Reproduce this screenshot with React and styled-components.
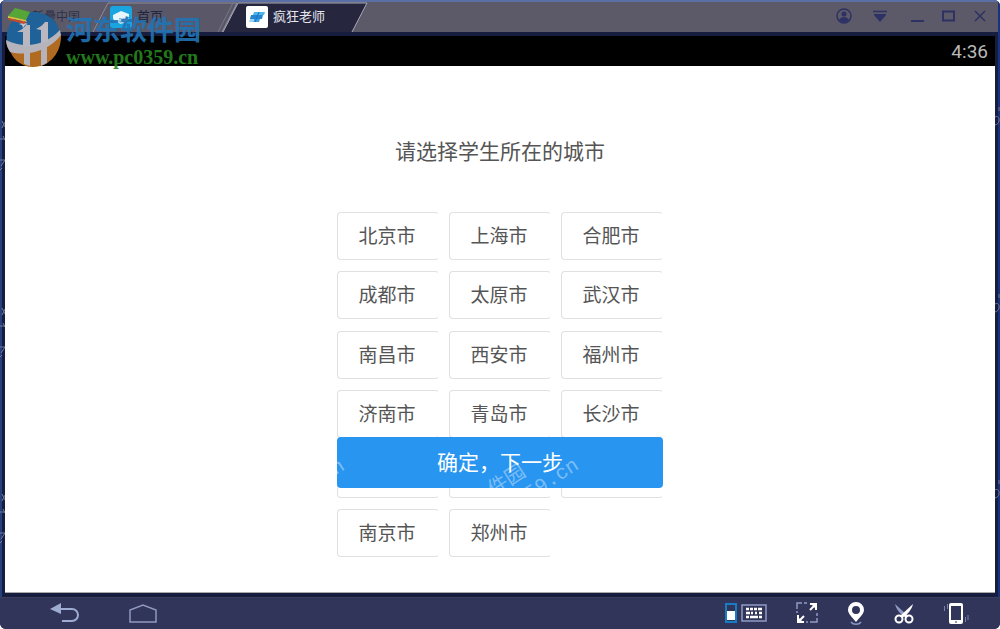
import React from "react";
import styled, { createGlobalStyle } from "styled-components";

const Global = createGlobalStyle`
  * { box-sizing: border-box; }
  html, body, #root { height: 100%; margin: 0; }
  body { background: #fff; font-family: Roboto, "Noto Sans CJK SC", sans-serif; }
  button { font: inherit; border: 0; padding: 0; margin: 0; background: none; cursor: pointer; }
  svg { display: block; }
`;

const Frame = styled.div`
  position: relative;
  min-height: 100vh;
  display: flex;
  flex-direction: column;
  background: #171d3e;
  border-radius: 6px;
  overflow: hidden;
`;

const TitleBar = styled.header`
  display: flex;
  align-items: center;
  height: 32px;
  background: #5c5a69;
  border-top: 2px solid #596fa5;
`;

const Brand = styled.div`
  width: 92px;
  padding-left: 32px;
  font-size: 12px;
  line-height: 30px;
  color: #2e3148;
`;

const TabList = styled.nav`
  display: flex;
  flex: 1;
  height: 30px;
`;

const Tab = styled.button`
  position: relative;
  width: 146px;
  margin-right: -16px;
  height: 30px;
  display: flex;
  align-items: center;
  padding-left: ${(p) => (p.$active ? 24 : 18)}px;
  font-size: 13px;
  color: ${(p) => (p.$active ? "#e4e6f0" : "#20243c")};
`;

const TabShape = styled.svg`
  position: absolute;
  inset: 0;
`;

const TabContent = styled.span`
  position: relative;
  display: flex;
  align-items: center;
  gap: 5px;
  line-height: 18px;
`;

const WindowControls = styled.div`
  display: flex;
  align-items: center;
  padding-right: 10px;
  gap: 10px;
`;

const ControlButton = styled.button`
  width: ${(p) => p.$width || 21}px;
  height: 24px;
  display: grid;
  place-items: center;
`;

const Device = styled.main`
  flex: 1;
  display: flex;
  flex-direction: column;
  border: solid #171d3e;
  border-width: 4px 5px;
`;

const StatusBar = styled.div`
  height: 30px;
  padding-right: 7px;
  background: #000;
  color: #b9b9b9;
  font-size: 19px;
  line-height: 32px;
  text-align: right;
`;

const Page = styled.section`
  position: relative;
  flex: 1;
  display: flex;
  flex-direction: column;
  align-items: center;
  padding: 72px 20px 34px;
  background: #fff;
  border-bottom: 1px solid #aaa;
`;

const Title = styled.h1`
  margin: 0 0 46px;
  font-size: 21px;
  line-height: 28px;
  font-weight: 400;
  color: #555;
`;

const CityGrid = styled.div`
  display: grid;
  grid-template-columns: repeat(3, 1fr);
  grid-auto-rows: 48px;
  align-content: space-between;
  column-gap: 10px;
  width: 326px;
  height: 345px;
`;

const City = styled.button`
  padding: 2px 2px 0 0;
  border: 1px solid #e0e0e0;
  border-right-color: transparent;
  border-radius: 4px;
  font-size: 19px;
  line-height: 28px;
  color: #555;
  background: #fff;
`;

const CoveredCity = styled(City).attrs({ as: "div" })``;

const Confirm = styled.button`
  position: absolute;
  bottom: 104px;
  width: 326px;
  height: 51px;
  overflow: hidden;
  border-radius: 4px;
  background: #2895f1;
  color: #fff;
  font-size: 21px;
  line-height: 53px;
`;

const FaintMark = styled.span`
  position: absolute;
  left: ${(p) => p.$left}px;
  top: ${(p) => p.$top}px;
  transform: rotate(-33deg);
  font-family: ${(p) => (p.$latin ? '"Liberation Mono", monospace' : '"Noto Sans CJK SC", sans-serif')};
  font-size: 20px;
  line-height: 24px;
  color: rgba(255, 255, 255, 0.4);
  pointer-events: none;
`;

const EdgeMarks = styled.svg`
  position: absolute;
  top: 100px;
  ${(p) => p.$side}: 0;
  pointer-events: none;
`;

const EdgeLine = styled.div`
  position: absolute;
  top: 2px;
  bottom: 32px;
  ${(p) => p.$side}: 0;
  width: 2px;
  background: ${(p) => (p.$side === "left" ? "#24407f" : "#17337e")};
`;

const NavBar = styled.footer`
  display: flex;
  justify-content: space-between;
  align-items: center;
  height: 32px;
  padding: 0 31px 0 50px;
  background: #32355a;
  border-top: 1px solid #3b3e5c;
`;

const NavGroup = styled.div`
  display: flex;
  align-items: center;
  gap: ${(p) => p.$gap}px;
`;

const Watermark = styled.div`
  position: absolute;
  left: 5px;
  top: 6px;
  display: flex;
  gap: 3px;
  pointer-events: none;
`;

const WatermarkText = styled.div`
  padding-top: 6px;
  opacity: 0.9;
`;

const WatermarkName = styled.div`
  font-family: "Noto Sans CJK SC", sans-serif;
  font-size: 27px;
  font-weight: 700;
  line-height: 34px;
  color: #2173b5;
`;

const WatermarkUrl = styled.div`
  font-family: "Liberation Serif", serif;
  font-size: 20px;
  font-weight: 700;
  line-height: 22px;
  color: #26861f;
`;

const cities = [
  "北京市", "上海市", "合肥市",
  "成都市", "太原市", "武汉市",
  "南昌市", "西安市", "福州市",
  "济南市", "青岛市", "长沙市",
  null, null, null,
  "南京市", "郑州市",
];

const INK = "#2d3163";

function TabBackground({ active }) {
  return (
    <TabShape width="146" height="30" aria-hidden="true">
      <path d="M1 30 16 1H145L130 30Z" fill={active ? "#26273e" : "#5a5868"} />
      <path d="M1 30 16 1H145L130 30" fill="none" stroke={active ? "#a5a8b8" : "#8b8b99"} />
      {!active && <path d="M126 30 141 1" stroke="#77778a" />}
    </TabShape>
  );
}

function HomeTabIcon() {
  return (
    <svg width="22" height="22" viewBox="0 0 22 22" aria-hidden="true">
      <rect width="22" height="22" rx="3" fill="#19a5df" />
      <path d="M3 9 11 5l8 3v5l-2 2-6 3-7-3-1-3Z" fill="#e8f5fb" />
      <path d="M9 12h8v4l-5 2-3-2z" fill="#7cbbe0" />
      <path d="m12 12v5m3-5v4M9 14h8" stroke="#d7eef8" />
    </svg>
  );
}

function TeacherTabIcon() {
  return (
    <svg width="22" height="22" viewBox="0 0 22 22" aria-hidden="true">
      <rect width="22" height="22" rx="2" fill="#fff" />
      <path d="M8 6h11l-1 3H7z" fill="#4db4e8" />
      <path d="M5 9h12l-1 4H4z" fill="#2587d4" />
      <path d="M8 13h6l-1 3H7z" fill="#38a1e2" />
      <path d="M4 13h4l-1 3H3z" fill="#9cd3f0" />
      <path d="m13 6-4 10" stroke="#1c70c4" />
    </svg>
  );
}

function SiteLogo() {
  return (
    <svg width="58" height="62" viewBox="0 0 58 62" aria-hidden="true">
      <path d="M2 38C-1 18 12 6 28 6c14 0 25 9 27 21C45 41 22 46 2 38Z" fill="#1f6299" />
      <path d="M5 45c18 4 38-2 51-17 1 18-11 33-28 33C18 61 9 55 5 45Z" fill="#b06b20" />
      <path d="M1 34c0 5 2 9 4 12 20 5 41-3 51-17l-1-5C42 38 21 44 1 34Z" fill="#b5b3bb" />
      <path d="M12 26c4-2 7-4 9-7h4v21h-7V26zM31 23c4-2 7-4 9-7h3v19l-7 3V24z" fill="#b9b8c1" />
      <path d="M19 43h6v17l-6-2zM36 40l6-3v20l-6 3z" fill="#b5b3bb" />
      <path d="m18 14 2 3 3 1-3 1-2 3-1-3-3-1 3-1z" fill="#c3c4cf" />
      <path d="m3 10 7-8 15 4-4 8z" fill="#55a637" />
      <path d="m3 10 18 4 1 2L3 12z" fill="#d5c43d" />
      <path d="m3 12 19 4-3 2-15-4z" fill="#c44a30" />
    </svg>
  );
}

function SideMarks({ side }) {
  const d = side === "left"
    ? "M2 21 5 27M5 22 2 28M0 39h5M3 36l2 4M0 60h5M1 66l4-6 1 5M0 70l2-2"
    : "M0 17c5-3 6 7 0 8M4 7v4";
  return (
    <>
      <EdgeLine $side={side} />
      <EdgeMarks $side={side} width="5" height="450" aria-hidden="true">
        {[0, 187, 373].map((y) => (
          <path key={y} d={d} transform={`translate(0 ${y})`} fill="none" stroke="#777c99" />
        ))}
      </EdgeMarks>
    </>
  );
}

function Icon({ w = 24, children }) {
  return <svg width={w} height="24" viewBox={`0 0 ${w} 24`} fill="none" aria-hidden="true">{children}</svg>;
}

export default function App() {
  return (
    <>
      <Global />
      <Frame>
        <SideMarks side="left" />
        <SideMarks side="right" />
        <TitleBar>
          <Brand>新疊中国</Brand>
          <TabList>
            <Tab>
              <TabBackground />
              <TabContent><HomeTabIcon />首页</TabContent>
            </Tab>
            <Tab $active>
              <TabBackground active />
              <TabContent><TeacherTabIcon />疯狂老师</TabContent>
            </Tab>
          </TabList>
          <WindowControls>
            <ControlButton aria-label="账户" $width={18}>
              <Icon w={18}>
                <circle cx="9" cy="11" r="7" stroke={INK} strokeWidth="1.5" />
                <circle cx="9" cy="9" r="2.5" fill={INK} />
                <path d="M4 15c2-4 8-4 10 0l-3 2H7z" fill={INK} />
              </Icon>
            </ControlButton>
            <ControlButton aria-label="菜单" $width={34}>
              <Icon w={14}><path d="M0 6.5h14" stroke={INK} strokeWidth="1.5" /><path d="M1 9h12v1l-6 7-6-7z" fill={INK} /></Icon>
            </ControlButton>
            <ControlButton aria-label="最小化">
              <Icon w={13}><path d="M0 16h13" stroke={INK} strokeWidth="2" /></Icon>
            </ControlButton>
            <ControlButton aria-label="最大化"><Icon w={13}><path d="M1 6.5h11v9H1z" stroke={INK} strokeWidth="2" /></Icon></ControlButton>
            <ControlButton aria-label="关闭"><Icon w={12}><path d="m1 6 10 10M11 6 1 16" stroke={INK} strokeWidth="1.5" /></Icon></ControlButton>
          </WindowControls>
        </TitleBar>
        <Device>
          <StatusBar>4:36</StatusBar>
          <Page>
            <Title>请选择学生所在的城市</Title>
            <CityGrid>
              {cities.map((name, i) => name ? <City key={i}>{name}</City> : <CoveredCity key={i} />)}
            </CityGrid>
            <Confirm>
              确定，下一步
              <FaintMark aria-hidden="true" $left={-16} $top={22} $latin>cn</FaintMark>
              <FaintMark aria-hidden="true" $left={149} $top={30}>件园</FaintMark>
              <FaintMark aria-hidden="true" $left={185} $top={31} $latin>59.cn</FaintMark>
            </Confirm>
          </Page>
        </Device>
        <NavBar>
          <NavGroup $gap={48}>
            <ControlButton aria-label="返回" $width={30}>
              <Icon w={30}><path d="M0 7 11 1v11z" fill="#9eabd2" /><path d="M10 7h12a6 6 0 0 1 0 12H12" stroke="#9eabd2" strokeWidth="2" /></Icon>
            </ControlButton>
            <ControlButton aria-label="主页" $width={30}>
              <Icon w={30}><path d="M2 20V8l13-5 13 5v12z" stroke="#9099c2" strokeWidth="1.5" /></Icon>
            </ControlButton>
          </NavGroup>
          <NavGroup $gap={24}>
            <ControlButton aria-label="键盘" $width={42}>
              <Icon w={42}>
                <path d="M1 2h10v18H1z" stroke="#177bc5" strokeWidth="2" />
                <path d="M2 9h8v9H2z" fill="#fff" />
                <path d="M17 3h24v16H17z" stroke="#8f9ac3" strokeWidth="1.5" />
                <path d="M21 7h3m1 0h3m1 0h3m1 0h4M21 11h4m1 0h2m2 0h2m2 0h3M21 15h3m1 0h8m1 0h3" stroke="#fff" strokeWidth="2.5" />
              </Icon>
            </ControlButton>
            <ControlButton aria-label="全屏" $width={32}>
              <Icon w={22}>
                <path d="M1 7V1h5m2 0h3M1 9v2M21 11v3m0 2v4h-7m-2 0h-2" stroke="#8f9ac3" strokeWidth="1.5" />
                <path d="M14 2h6v6M19 3l-5 5M2 13v7h6M3 19l5-5" stroke="#fff" strokeWidth="2" />
                <path d="m15 2 5 5V2zM2 15v5h5z" fill="#fff" />
              </Icon>
            </ControlButton>
            <ControlButton aria-label="定位" $width={18}>
              <Icon w={18}>
                <path d="M4 20c2 3 8 3 10 0" stroke="#8799c4" strokeWidth="1.5" />
                <path fillRule="evenodd" d="M9 20C6 16 1 12 1 8a8 8 0 0 1 16 0c0 4-5 8-8 12ZM9 4a4 4 0 1 0 0 8 4 4 0 0 0 0-8Z" fill="#fff" />
              </Icon>
            </ControlButton>
            <ControlButton aria-label="截图" $width={30}>
              <Icon w={20}>
                <path d="M1 2c1 5 5 10 10 13l2-2z" fill="#8f9ac3" />
                <path d="M19 2c-1 5-5 10-11 14l-2-2z" fill="#fff" />
                <circle cx="5" cy="17" r="3.5" stroke="#fff" strokeWidth="2" />
                <circle cx="15" cy="17" r="3.5" stroke="#fff" strokeWidth="2" />
                <path d="m10 12 3 3" stroke="#fff" strokeWidth="3" />
              </Icon>
            </ControlButton>
            <ControlButton aria-label="摇一摇" $width={26}>
              <Icon w={26}>
                <rect x="6" y="1" width="14" height="21" rx="2" fill="#fff" />
                <path d="M8 4h10v14H8z" fill="#32355a" />
                <path d="M12 20h2" stroke="#32355a" />
                <path d="M1.5 4v5M4.5 2v5M22.5 15v5M25 13v5" stroke="#7984ad" />
              </Icon>
            </ControlButton>
          </NavGroup>
        </NavBar>
        <Watermark>
          <SiteLogo />
          <WatermarkText>
            <WatermarkName>河东软件园</WatermarkName>
            <WatermarkUrl>www.pc0359.cn</WatermarkUrl>
          </WatermarkText>
        </Watermark>
      </Frame>
    </>
  );
}
